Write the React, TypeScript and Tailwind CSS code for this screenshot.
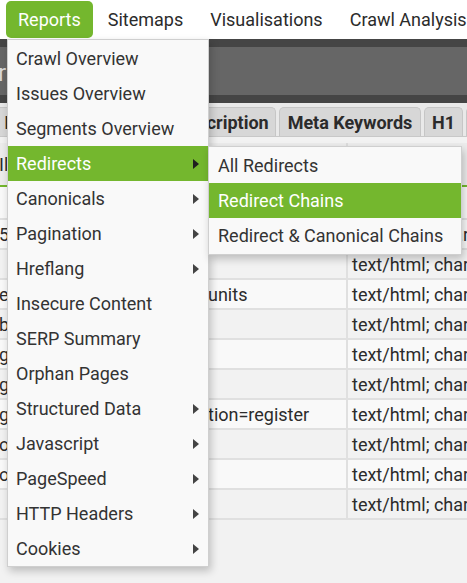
import React from "react";

type Item = { label: string; sub?: boolean; active?: boolean };

const items: Item[] = [
  { label: "Crawl Overview" },
  { label: "Issues Overview" },
  { label: "Segments Overview" },
  { label: "Redirects", sub: true, active: true },
  { label: "Canonicals", sub: true },
  { label: "Pagination", sub: true },
  { label: "Hreflang", sub: true },
  { label: "Insecure Content" },
  { label: "SERP Summary" },
  { label: "Orphan Pages" },
  { label: "Structured Data", sub: true },
  { label: "Javascript", sub: true },
  { label: "PageSpeed", sub: true },
  { label: "HTTP Headers", sub: true },
  { label: "Cookies", sub: true },
];

const subItems = [
  { label: "All Redirects" },
  { label: "Redirect Chains", active: true },
  { label: "Redirect & Canonical Chains" },
];

const rows = [
  { a: "5", b: "" },
  { a: "", b: "" },
  { a: "ec", b: "units" },
  { a: "b", b: "" },
  { a: "g", b: "" },
  { a: "g", b: "" },
  { a: "g", b: "tion=register" },
  { a: "o", b: "" },
  { a: "o", b: "" },
  { a: "", b: "" },
];

function Arrow({ white }: { white?: boolean }) {
  return (
    <span
      className={
        white
          ? "ml-auto h-0 w-0 border-y-[5px] border-l-[6px] border-y-transparent border-l-[#1f1f1f]"
          : "ml-auto h-0 w-0 border-y-[5px] border-l-[6px] border-y-transparent border-l-[#444444]"
      }
    />
  );
}

export default function App() {
  return (
    <div
      className="relative h-[583px] w-[467px] overflow-hidden bg-[#f2f2f2] text-[18px] text-[#2b2b2b]"
      style={{ fontFamily: "Roboto, 'Liberation Sans', sans-serif" }}
    >
      {/* Top nav */}
      <nav className="flex h-[39px] items-start gap-[3px] bg-white pl-[6px] pt-px">
        <div className="flex h-[37px] items-center whitespace-nowrap rounded-[5px] bg-[#74b72e] px-3 text-white">
          Reports
        </div>
        <div className="flex h-[37px] items-center whitespace-nowrap px-3">Sitemaps</div>
        <div className="flex h-[37px] items-center whitespace-nowrap px-3">Visualisations</div>
        <div className="flex h-[37px] items-center whitespace-nowrap px-3">Crawl Analysis</div>
      </nav>

      {/* Dark header band */}
      <div className="flex h-[64px] flex-col bg-[#454545] py-[8px]">
        <div className="flex h-[48px] items-center bg-[#666666] text-[24px] text-[#d8d8d8]">
          <span className="-ml-[2px] mt-[4px]">r</span>
        </div>
      </div>

      {/* Tabs */}
      <div className="flex h-[34px] items-end border-b border-[#c8c8c8] bg-[#e9e9e9]">
        <div className="-ml-[20px] flex items-end gap-[3px] whitespace-nowrap font-bold">
          <div className="flex h-[29px] w-[140px] items-center justify-center rounded-t-[5px] border border-b-0 border-[#c6c6c6] bg-[#d7d7d7]">
            Page Titles
          </div>
          <div className="flex h-[29px] w-[153px] items-center justify-center rounded-t-[5px] border border-b-0 border-[#c6c6c6] bg-[#d7d7d7]">
            Meta Description
          </div>
          <div className="flex h-[29px] w-[142px] items-center justify-center rounded-t-[5px] border border-b-0 border-[#c6c6c6] bg-[#d7d7d7]">
            Meta Keywords
          </div>
          <div className="flex h-[29px] w-[39px] items-center justify-center rounded-t-[5px] border border-b-0 border-[#c6c6c6] bg-[#d7d7d7]">
            H1
          </div>
          <div className="flex h-[29px] w-[39px] items-center justify-center rounded-t-[5px] border border-b-0 border-[#c6c6c6] bg-[#d7d7d7]">
            H2
          </div>
        </div>
      </div>

      {/* Table */}
      <div className="pt-[6px]">
        <div className="grid grid-cols-[120px_228px_1fr] border-b-2 border-[#74b72e] bg-[#ececec]">
          <div className="flex h-[42px] items-center overflow-hidden whitespace-nowrap border-r-2 border-[#dcdcdc]">
            <span className="-ml-[1px]">Il</span>
          </div>
          <div className="h-[42px] border-r-2 border-[#dcdcdc]" />
          <div className="h-[42px]" />
        </div>
        <div className="h-[33px] border-b-2 border-[#e0e0e0] bg-[#f9f9f9]" />
        {rows.map((r, i) => (
          <div
            key={i}
            className={
              i % 2 === 0
                ? "grid h-[30px] grid-cols-[120px_228px_1fr] border-b-2 border-[#e0e0e0] bg-[#f9f9f9]"
                : "grid h-[30px] grid-cols-[120px_228px_1fr] border-b-2 border-[#e0e0e0] bg-[#f2f2f2]"
            }
          >
            <div className="flex items-center overflow-hidden whitespace-nowrap border-r-2 border-[#e0e0e0]">
              <span className="-ml-[1px]">{r.a}</span>
            </div>
            <div className="flex items-center overflow-hidden whitespace-nowrap border-r-2 border-[#e0e0e0] pl-[88px]">
              {r.b}
            </div>
            <div className="flex items-center overflow-hidden whitespace-nowrap pl-[4px]">
              text/html; charset=UTF-8
            </div>
          </div>
        ))}
      </div>

      {/* Dropdown menu */}
      <div className="absolute left-[7px] top-[39px] w-[202px] border border-[#cfcfcf] bg-[#f9f9f9] pt-px shadow-[2px_4px_8px_rgba(0,0,0,0.22)]">
        {items.map((it) => (
          <div
            key={it.label}
            className={
              it.active
                ? "relative flex h-[35px] items-center whitespace-nowrap bg-[#74b72e] pl-2 pr-[9px] text-white"
                : "relative flex h-[35px] items-center whitespace-nowrap pl-2 pr-[9px] text-[#333333]"
            }
          >
            {it.label}
            {it.sub && <Arrow white={it.active} />}
            {it.active && (
              <div className="absolute left-full top-0 z-10 w-[254px] border border-[#cfcfcf] bg-[#f9f9f9] py-px shadow-[2px_4px_8px_rgba(0,0,0,0.22)]">
                {subItems.map((s) => (
                  <div
                    key={s.label}
                    className={
                      s.active
                        ? "flex h-[35px] items-center whitespace-nowrap bg-[#74b72e] pl-[9px] text-white"
                        : "flex h-[35px] items-center whitespace-nowrap pl-[9px] text-[#333333]"
                    }
                  >
                    {s.label}
                  </div>
                ))}
              </div>
            )}
          </div>
        ))}
      </div>
    </div>
  );
}
